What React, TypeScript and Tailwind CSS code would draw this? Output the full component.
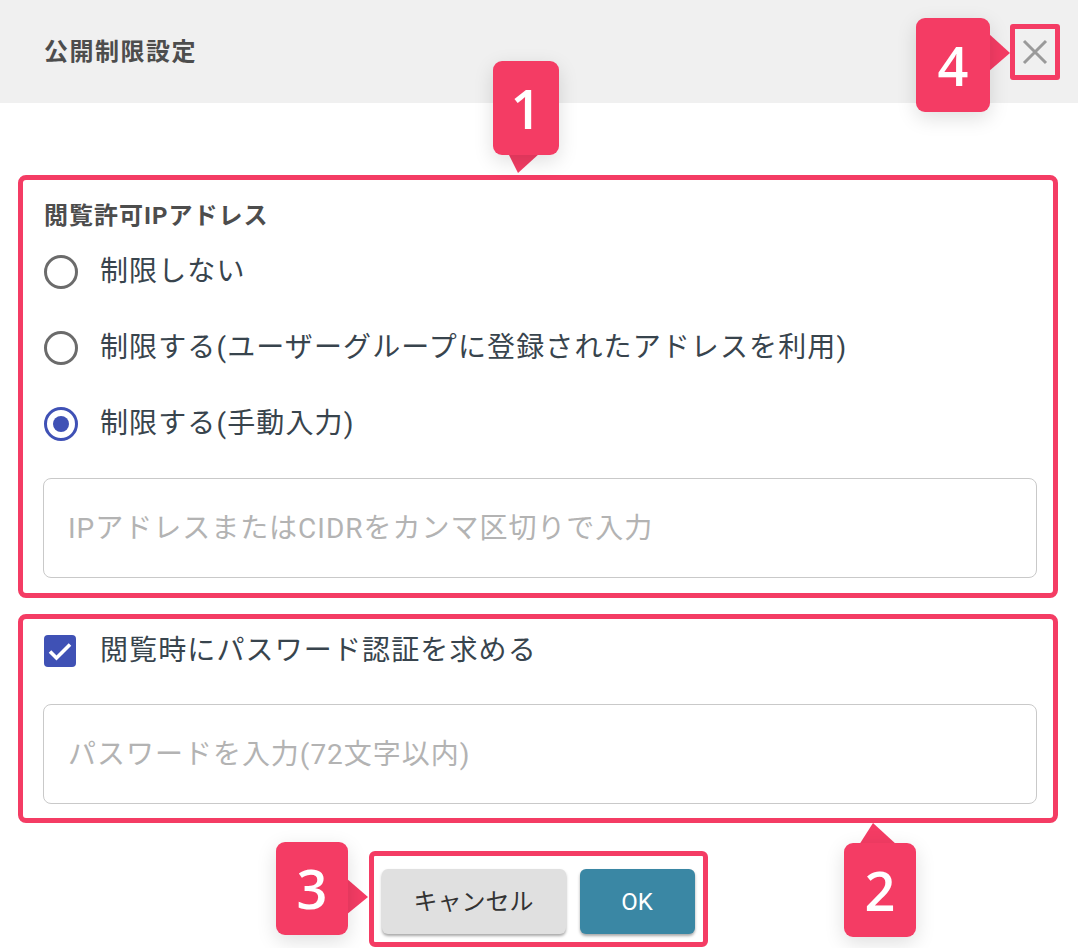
import React from 'react';

const FONT = { fontFamily: 'Roboto, "Noto Sans CJK JP", sans-serif' };

// annotation marker: rounded box + tail drawn as svg
function Marker({ n, className, w, h, tail }: { n: string; className: string; w: number; h: number; tail: string }) {
  return (
    <div className={`absolute ${className}`}>
      <svg className="absolute left-0 top-0 overflow-visible" width={w} height={h}>
        <polygon points={tail} fill="#f43c64" />
      </svg>
      <div
        className="relative flex h-full w-full items-center justify-center rounded-[9px] bg-[#f43c64] text-[54px] font-semibold text-white shadow-[0_6px_20px_rgba(0,0,0,0.13)]"
        style={{ fontFamily: '"Open Sans", Roboto, sans-serif' }}
      >
        {n}
      </div>
    </div>
  );
}

function Radio({ label, checked }: { label: string; checked?: boolean }) {
  return (
    <div className="flex h-[56px] items-center">
      <span
        className={`ml-px flex h-[34px] w-[34px] shrink-0 items-center justify-center rounded-full border-[3px] ${
          checked ? 'border-[#3f51b5]' : 'border-[#6b6b6b]'
        }`}
      >
        {checked && <span className="h-[16px] w-[16px] rounded-full bg-[#3f51b5]" />}
      </span>
      <span className="ml-[22px] text-[28px] tracking-[0.04em] text-[#38444d]">{label}</span>
    </div>
  );
}

function TextBox({ placeholder }: { placeholder: string }) {
  return (
    <input
      readOnly
      placeholder={placeholder}
      className="h-[100px] w-full rounded-[8px] border border-[#c9c9c9] bg-white px-[24px] text-[28px] tracking-[0.035em] outline-none placeholder:text-[#b3b3b3]"
    />
  );
}

export default function App() {
  return (
    <div className="relative h-[948px] w-[1078px] overflow-hidden bg-white" style={FONT}>
      {/* header */}
      <div className="flex h-[103px] items-center justify-between bg-[#f0f0f0] pl-[44px] pr-[18px]">
        <h1 className="text-[24px] font-bold tracking-[1.5px] text-[#4d4d4d]">公開制限設定</h1>
        <button className="flex h-[56px] w-[50px] items-center justify-center rounded-[3px] border-[5px] border-[#f43c64]">
          <svg width="26" height="26" viewBox="0 0 26 26">
            <path d="M2 2L24 24M24 2L2 24" stroke="#9a9a9a" strokeWidth="3" />
          </svg>
        </button>
      </div>

      <div className="flex flex-col pl-[18px] pr-[20px] pt-[72px]">
        {/* IP restriction */}
        <section className="flex flex-col rounded-[8px] border-[5px] border-[#f43c64] pb-[15px] pl-[20px] pr-[16px] pt-[20px]">
          <div className="ml-px text-[24px] font-bold leading-[32px] tracking-[1px] text-[#4d4d4d]">閲覧許可IPアドレス</div>
          <div className="mt-[12px] flex flex-col gap-[20px]">
            <Radio label="制限しない" />
            <Radio label="制限する(ユーザーグループに登録されたアドレスを利用)" />
            <Radio label="制限する(手動入力)" checked />
          </div>
          <div className="mt-[26px]">
            <TextBox placeholder="IPアドレスまたはCIDRをカンマ区切りで入力" />
          </div>
        </section>

        {/* password */}
        <section className="mt-[16px] flex flex-col rounded-[8px] border-[5px] border-[#f43c64] pb-[14px] pl-[20px] pr-[16px] pt-[4px]">
          <div className="flex h-[56px] items-center">
            <span className="ml-px flex h-[32px] w-[32px] items-center justify-center rounded-[4px] bg-[#3f51b5]">
              <svg width="32" height="32" viewBox="0 0 32 32">
                <path d="M6 16.5l6.5 6.5L26 9.5" fill="none" stroke="white" strokeWidth="3.6" />
              </svg>
            </span>
            <span className="ml-[24px] text-[28px] tracking-[0.04em] text-[#38444d]">閲覧時にパスワード認証を求める</span>
          </div>
          <div className="mt-[25px]">
            <TextBox placeholder="パスワードを入力(72文字以内)" />
          </div>
        </section>

        {/* actions */}
        <div className="mt-[28px] flex justify-center">
          <div className="flex gap-[14px] rounded-[6px] border-[5px] border-[#f43c64] px-[8px] pb-[8px] pt-[13px]">
            <button className="h-[65px] w-[184px] rounded-[6px] bg-[#e0e0e0] text-[24px] text-[#333] shadow-[0_2px_3px_rgba(0,0,0,0.35)]">
              キャンセル
            </button>
            <button className="h-[65px] w-[115px] rounded-[6px] bg-[#3a87a4] text-[24px] text-white shadow-[0_2px_3px_rgba(0,0,0,0.35)]">
              OK
            </button>
          </div>
        </div>
      </div>

      {/* annotation markers */}
      <Marker n="1" className="left-[493px] top-[61px] h-[94px] w-[66px]" w={66} h={94} tail="15,92 25,112 47,92" />
      <Marker n="4" className="left-[916px] top-[18px] h-[94px] w-[74px]" w={74} h={94} tail="72,15 94,35 72,54" />
      <Marker n="2" className="left-[844px] top-[843px] h-[94px] w-[72px]" w={72} h={94} tail="15,2 29,-20 53,2" />
      <Marker n="3" className="left-[276px] top-[842px] h-[93px] w-[72px]" w={72} h={93} tail="70,36 92,55 70,73" />
    </div>
  );
}
